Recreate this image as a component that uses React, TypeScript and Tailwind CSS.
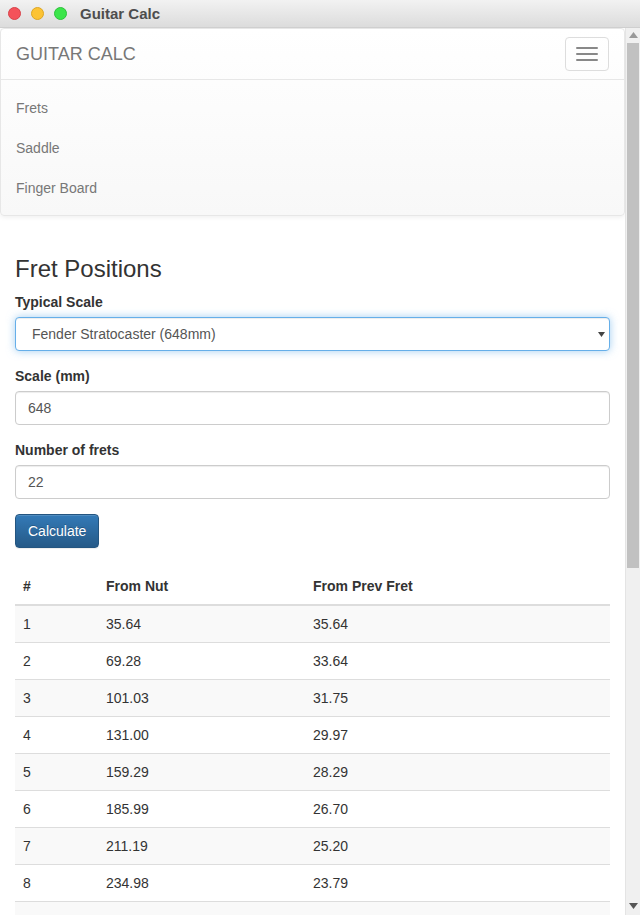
import React from "react"

const rows: [number, string, string][] = [
  [1, "35.64", "35.64"],
  [2, "69.28", "33.64"],
  [3, "101.03", "31.75"],
  [4, "131.00", "29.97"],
  [5, "159.29", "28.29"],
  [6, "185.99", "26.70"],
  [7, "211.19", "25.20"],
  [8, "234.98", "23.79"],
  [9, "257.43", "22.45"],
  [10, "278.62", "21.19"],
]

function TitleBar() {
  return (
    <div className="flex h-[28px] items-center bg-gradient-to-b from-[#f2f2f2] to-[#dcdcdc] border-b border-[#cfcfcf]">
      <div className="ml-[8px] flex items-center gap-[10px]">
        <span className="block h-[13px] w-[13px] rounded-full bg-[#f4525a] border border-[#d8424a]" />
        <span className="block h-[13px] w-[13px] rounded-full bg-[#fcc334] border border-[#dda623]" />
        <span className="block h-[13px] w-[13px] rounded-full bg-[#3ce54b] border border-[#2cc23a]" />
      </div>
      <span className="ml-[13px] text-[15px] font-bold text-[#4d4d4d]">Guitar Calc</span>
    </div>
  )
}

function Navbar() {
  return (
    <nav className="rounded-[4px] border border-[#e7e7e7] bg-gradient-to-b from-white to-[#f8f8f8] shadow-[0_1px_5px_rgba(0,0,0,0.075)]">
      <div className="flex h-[50px] items-center justify-between">
        <span className="pl-[15px] text-[18px] leading-[20px] text-[#777]">GUITAR CALC</span>
        <button className="mr-[15px] flex h-[34px] w-[44px] flex-col items-center justify-center gap-[4px] rounded-[4px] border border-[#ddd]">
          <span className="block h-[2px] w-[22px] rounded-[1px] bg-[#888]" />
          <span className="block h-[2px] w-[22px] rounded-[1px] bg-[#888]" />
          <span className="block h-[2px] w-[22px] rounded-[1px] bg-[#888]" />
        </button>
      </div>
      <ul className="border-t border-[#e7e7e7] py-[7.5px]">
        {["Frets", "Saddle", "Finger Board"].map((item) => (
          <li key={item} className="px-[15px] py-[10px] leading-[20px] text-[#777]">
            {item}
          </li>
        ))}
      </ul>
    </nav>
  )
}

function Field({ label, value }: { label: string; value: string }) {
  return (
    <div className="mb-[15px]">
      <div className="mb-[5px] font-bold leading-[20px] text-[#333]">{label}</div>
      <div className="flex h-[34px] items-center rounded-[4px] border border-[#ccc] bg-white px-[12px] text-[#555] shadow-[inset_0_1px_1px_rgba(0,0,0,0.075)]">
        {value}
      </div>
    </div>
  )
}

function Scrollbar() {
  return (
    <div className="relative w-[15px] shrink-0 border-l border-[#e4e4e4] bg-[#f0f0f0]">
      <svg className="absolute left-[3px] top-[4px]" width="9" height="6" viewBox="0 0 9 6">
        <polygon points="0,6 9,6 4.5,0" fill="#999" />
      </svg>
      <div className="absolute left-[1px] top-[15px] h-[525px] w-[12px] bg-[#c1c1c1]" />
      <svg className="absolute bottom-[6px] left-[3px]" width="9" height="6" viewBox="0 0 9 6">
        <polygon points="0,0 9,0 4.5,6" fill="#555" />
      </svg>
    </div>
  )
}

export default function App() {
  return (
    <div className="h-[915px] w-[640px] overflow-hidden bg-white text-[14px] leading-[20px] text-[#333]" style={{ fontFamily: '"Liberation Sans", Arial, sans-serif' }}>
      <TitleBar />
      <div className="flex h-[887px]">
        <div className="w-[625px] overflow-hidden">
          <Navbar />
          <div className="px-[15px] pt-[20px]">
            <h3 className="mt-[20px] mb-[10px] text-[24px] leading-[26.4px] font-normal text-[#333]">Fret Positions</h3>
            <div className="mb-[15px]">
              <div className="mb-[5px] font-bold leading-[20px]">Typical Scale</div>
              <div className="flex h-[34px] items-center justify-between rounded-[4px] border border-[#66afe9] bg-white pl-[16px] pr-[4px] text-[#555] shadow-[inset_0_1px_1px_rgba(0,0,0,0.075),0_0_8px_rgba(102,175,233,0.6)]">
                <span>Fender Stratocaster (648mm)</span>
                <svg width="7" height="5" viewBox="0 0 7 5">
                  <polygon points="0,0 7,0 3.5,5" fill="#444" />
                </svg>
              </div>
            </div>
            <Field label="Scale (mm)" value="648" />
            <Field label="Number of frets" value="22" />
            <button className="h-[34px] rounded-[4px] border border-[#245580] bg-gradient-to-b from-[#337ab7] to-[#265a88] px-[12px] text-white [text-shadow:0_-1px_0_rgba(0,0,0,0.2)] shadow-[inset_0_1px_0_rgba(255,255,255,0.15),0_1px_1px_rgba(0,0,0,0.075)]">
              Calculate
            </button>
            <table className="mt-[20px] w-full border-separate border-spacing-0 text-left">
              <thead>
                <tr>
                  <th className="w-[83px] border-b-2 border-[#ddd] p-[8px] font-bold">#</th>
                  <th className="w-[207px] border-b-2 border-[#ddd] p-[8px] font-bold">From Nut</th>
                  <th className="border-b-2 border-[#ddd] p-[8px] font-bold">From Prev Fret</th>
                </tr>
              </thead>
              <tbody>
                {rows.map(([n, nut, prev], i) => (
                  <tr key={n} className={i % 2 === 0 ? "bg-[#f9f9f9]" : ""}>
                    <td className={i === 0 ? "h-[36px] p-[8px]" : "h-[37px] border-t border-[#ddd] p-[8px]"}>{n}</td>
                    <td className={i === 0 ? "h-[36px] p-[8px]" : "h-[37px] border-t border-[#ddd] p-[8px]"}>{nut}</td>
                    <td className={i === 0 ? "h-[36px] p-[8px]" : "h-[37px] border-t border-[#ddd] p-[8px]"}>{prev}</td>
                  </tr>
                ))}
              </tbody>
            </table>
          </div>
        </div>
        <Scrollbar />
      </div>
    </div>
  )
}
